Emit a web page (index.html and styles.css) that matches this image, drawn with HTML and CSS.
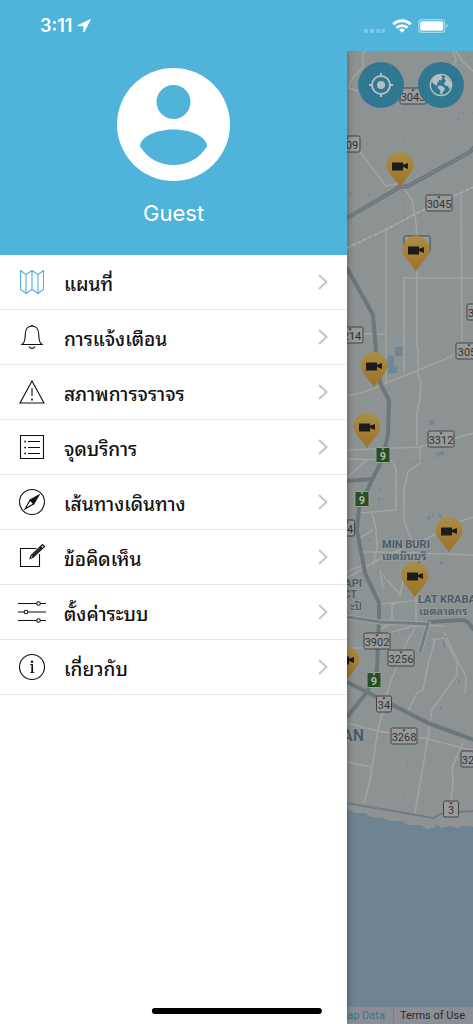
FILE: index.html
```
<!DOCTYPE html>
<html lang="th">
<head>
    <meta charset="UTF-8">
    <meta name="viewport" content="width=device-width, initial-scale=1.0">
    <title>Traffic Map</title>
    <link rel="stylesheet" href="styles.css">
</head>
<body>
    <header class="status-bar">
        <div class="status-time">
            <span>3:11</span>
            <svg width="14" height="14" viewBox="0 0 14 14"><path d="M13.4.6.7 6.7h6.2v6.2z" fill="#fff" stroke="#fff" stroke-linejoin="round"/></svg>
        </div>
        <div class="status-icons">
            <svg class="signal" width="22" height="14" viewBox="0 0 22 14" fill="#7cc9e6">
                <rect x="0" y="10" width="4" height="4" rx="1"/><rect x="6" y="10" width="4" height="4" rx="1"/><rect x="12" y="10" width="4" height="4" rx="1"/><rect x="17" y="10" width="4" height="4" rx="1"/>
            </svg>
            <svg width="20" height="14" viewBox="0 0 20 14" fill="none" stroke="#fff" stroke-width="2.8">
                <path d="M1.3 5.3a12.4 12.4 0 0 1 17.4 0M4.5 8.8a7.8 7.8 0 0 1 11 0"/>
                <path d="m10 13.8-3-3a4.2 4.2 0 0 1 6 0z" fill="#fff" stroke="none"/>
            </svg>
            <svg width="31" height="14" viewBox="0 0 31 14">
                <rect x=".7" y=".7" width="26" height="12.6" rx="3.4" fill="none" stroke="#a2d7ec" stroke-width="1.2"/>
                <rect x="2.2" y="2.2" width="23" height="9.6" rx="2" fill="#fff"/>
                <path d="M28.3 4.8c1.7.6 1.7 3.8 0 4.4z" fill="#a2d7ec"/>
            </svg>
        </div>
    </header>

    <div class="screen">
        <aside class="drawer">
            <div class="profile">
                <svg class="avatar" viewBox="0 0 113 113">
                    <circle cx="56.5" cy="56.5" r="56.5" fill="#fff"/>
                    <circle cx="56.5" cy="34" r="17" fill="#50b3d9"/>
                    <path d="M23 78.500C23 68 41 61.500 56.500 61.500S90 68 90 78.500C82 90.500 71 97 56.500 97S31 90.500 23 78.500z" fill="#50b3d9"/>
                </svg>
                <div class="profile-name">Guest</div>
            </div>

            <nav class="menu">
                <a href="#map">
                    <svg class="icon active" viewBox="0 0 28 28"><path d="M2.500 2.500 8 6.500v19l-5.500-4zM8 6.500l6-4v19l-6 4M14 2.500l6 4v19l-6-4M20 6.500l5.500-4v19l-5.500 4"/></svg>
                    <span>แผนที่</span>
                    <svg class="chevron" viewBox="0 0 10 16"><path d="m1 1 7.500 7L1 15"/></svg>
                </a>
                <a href="#notifications">
                    <svg class="icon" viewBox="0 0 28 28"><path d="M4 21.500c3-2.500 3-5 3.300-10.500C7.600 5.800 10.300 3 14 3s6.400 2.800 6.700 8c.3 5.500.3 8 3.300 10.500zM11.200 23.500c.8 2.600 4.800 2.600 5.600 0M13 2.500h2"/></svg>
                    <span>การแจ้งเตือน</span>
                    <svg class="chevron" viewBox="0 0 10 16"><path d="m1 1 7.500 7L1 15"/></svg>
                </a>
                <a href="#traffic">
                    <svg class="icon" viewBox="0 0 28 28"><path d="M14 3 26 25H2zM14 10v8"/><path d="M14 20.500v2" stroke-width="1.600"/></svg>
                    <span>สภาพการจราจร</span>
                    <svg class="chevron" viewBox="0 0 10 16"><path d="m1 1 7.500 7L1 15"/></svg>
                </a>
                <a href="#services">
                    <svg class="icon" viewBox="0 0 28 28"><path d="M2.500 2.500h23v23h-23zM10 8.500h12M10 14.500h12M10 20.500h12"/><path d="M6.300 8.500H8M6.300 14.500H8M6.300 20.500H8" stroke-width="1.700"/></svg>
                    <span>จุดบริการ</span>
                    <svg class="chevron" viewBox="0 0 10 16"><path d="m1 1 7.500 7L1 15"/></svg>
                </a>
                <a href="#routes">
                    <svg class="icon" viewBox="0 0 28 28"><circle cx="14" cy="14" r="12.500"/><path d="m7 21 5.200-9 3.600 3.800z"/><path d="M21 7 12.200 12l3.600 3.800z" fill="#111"/></svg>
                    <span>เส้นทางเดินทาง</span>
                    <svg class="chevron" viewBox="0 0 10 16"><path d="m1 1 7.500 7L1 15"/></svg>
                </a>
                <a href="#feedback">
                    <svg class="icon" viewBox="0 0 28 28"><path d="M18.500 5.500h-16v18h19V11M12 15.500l1-3L24.500 1.500l2 2L15 14.500zM22.500 3.500l2 2M14 13.500l9.500-9"/></svg>
                    <span>ข้อคิดเห็น</span>
                    <svg class="chevron" viewBox="0 0 10 16"><path d="m1 1 7.500 7L1 15"/></svg>
                </a>
                <a href="#settings">
                    <svg class="icon" viewBox="0 0 28 28"><path d="M0 5.500h18.500M22.500 5.500H28M0 14h6M10 14h18M0 22.500h18.500M22.500 22.500H28"/><g><circle cx="20.500" cy="5.500" r="1.800"/><circle cx="8" cy="14" r="1.800"/><circle cx="20.500" cy="22.500" r="1.800"/></g></svg>
                    <span>ตั้งค่าระบบ</span>
                    <svg class="chevron" viewBox="0 0 10 16"><path d="m1 1 7.500 7L1 15"/></svg>
                </a>
                <a href="#about">
                    <svg class="icon" viewBox="0 0 28 28"><circle cx="14" cy="14" r="12.500"/><path d="M12 11.500h2.300M12 19.500h4.400" stroke-width=".8"/><circle cx="14" cy="8.700" r=".7" fill="#111"/><path d="M14.200 11.200v8.300" stroke-width="1.700"/></svg>
                    <span>เกี่ยวกับ</span>
                    <svg class="chevron" viewBox="0 0 10 16"><path d="m1 1 7.500 7L1 15"/></svg>
                </a>
            </nav>
        </aside>

        <main class="map">
            <svg class="map-canvas" viewBox="347 51 126 973" preserveAspectRatio="xMinYMin slice">
                <defs>
                    <linearGradient id="pinFill" x1="0" y1="0" x2="0" y2="1">
                        <stop offset="0" stop-color="#aa8e45"/>
                        <stop offset="1" stop-color="#9c7226"/>
                    </linearGradient>
                    <g id="pin">
                        <path d="M0 0C-4-7-13.500-14-13.500-21.500a13.500 13.500 0 0 1 27 0C13.500-14 4-7 0 0z" fill="url(#pinFill)"/>
                        <path d="M-8-24.500H3v2.200l5-1.800v6l-5-1.800v3.400H-8z" fill="#1c1c1c"/>
                    </g>
                    <g id="shield4">
                        <rect class="plate" x="-13" y="-8" width="26" height="16" rx="1.500"/>
                        <path d="M-1.700-6.500h3.400L0-4.500z"/>
                    </g>
                    <g id="shield2">
                        <rect class="plate" x="-7.500" y="-8" width="15" height="16" rx="1.500"/>
                        <path d="M-1.700-6.500h3.400L0-4.500z"/>
                    </g>
                    <g id="shieldGreen">
                        <rect class="plate-green" x="-7" y="-7.500" width="14" height="15" rx="1"/>
                        <path d="M-1.700-6.500h3.400L0-4.500z"/>
                    </g>
                </defs>

                <!-- sea -->
                <path class="water" d="M347 809l8 4 10 0 6 4 12 1 6 3 12 0 8 4 12 0 6 4 6-1 4-3 4 3 8-2 9 2 5-2 12 1v400H347z"/>
                <g class="pond">
                    <path d="M395 347h8v9h-8zM388 356h6v11h3v6h-9v-5h-2zM429 420h5v5h-5zM435 454l8-3 1 3-7 2zM349 193l3-1-1 3zM457 120l2-3v4zM424 462l3-1v1zM432 508l2 9-1 1zM438 512l4 4-2 3zM439 561l5 2-4 1zM443 635l2 10-2 2zM376 490l6-2-2 2zM378 498h3l-3 3zM426 518l5-2-2 5zM367 194l2-1v2zM458 680h2v2h-2zM440 707h2v2h-2zM369 539h2v2h-2zM386 577h2v2h-2z"/>
                </g>

                <!-- minor roads -->
                <g class="road">
                    <path d="M366 51l-3 2v15l-10 9-5 11 11 3M453 51l3 9-3 6 4 4M456 51l7 11 11 10"/>
                    <path d="M360 152l26 34 14-3 12 16 4 24 1 10v112l1 7v23l3 7-1 16-3 15v33"/>
                    <path d="M386 228v154M461 193l1 148M404 373v-95h70M363 334h23M347 396l20-5 93-38 14-5"/>
                    <path d="M347 450l73-3 54-14M347 459l43 1 6 7v43l-36 3M420 447v16l-12 9-4 18v30l8 22M348 477l19-17"/>
                    <path d="M372 513l4 15 1 20-4 17M357 540l16-10M360 552h25l89 3M347 578l36-21 47-20 20-13 24-7M347 571l20-7M380 570l3 18M383 575l17 20 4-18M380 604l43-4M392 622v-17l6-3M416 592v35M392 622l-18 12"/>
                    <path d="M382 635l28-8 15-2 20 1M408 640l-18 43-12 47-8 50-6 23M408 640l7-12M435 640l-6 20-6 30-6 3-10 20M432 640l12-2 13 25v12l-25 35-4 27-13 76"/>
                    <path d="M347 723l31 8 50 8 35 9 11 2M463 742l-11 26 1 14-2 20M347 762l25 5M353 648h15M444 632l9 19 13 26-1 17"/>
                </g>
                <path class="rail-bed" d="M347 248l38-18 38-20 51-23"/>
                <path class="rail" d="M347 248l38-18 38-20 51-23"/>
                <path class="boundary" d="M438 110q8 7 20 3l16 0M368 461l20 2 30-1 50-14M390 633l34 0 49 8M404 137v82M408 757l-5 50"/>

                <!-- highways -->
                <path class="highway" d="M347 268l26 47 3 37 4 31 9 17-1 35-6 25-10 20-13 28-2 22 8 43 14 30v17l-2 50-10 22-20 25M347 481l25-2M347 682l36 18 45 23 46 17"/>
                <path class="highway" d="M428 622l35-2 5 2 6 8"/>
                <path class="motorway" d="M347 218l53-31 8-1 62-34 4-5"/>
                <path class="motorway-line" d="M347 218l53-31 8-1 62-34 4-5"/>
                <path class="lane-edge" d="M347 617l33 5 48 2-8 28"/>
                <path class="lane" d="M347 617l33 5 48 2-8 28"/>
                <path class="motorway-thin" d="M347 803l86 15 10-5 31-2"/>

                <!-- road numbers -->
                <g class="shield">
                    <use href="#shield4" x="413" y="96"/><text x="413" y="101">3043</text>
                    <use href="#shield4" x="347" y="144"/><text x="352" y="149">09</text>
                    <use href="#shield4" x="439" y="203"/><text x="439" y="208">3045</text>
                    <use href="#shield4" x="417" y="244"/>
                    <use href="#shield4" x="350" y="335"/><text x="352" y="340">214</text>
                    <use href="#shield4" x="480" y="312"/><text x="471" y="317">3</text>
                    <use href="#shield4" x="469" y="351"/><text x="467" y="356">305</text>
                    <use href="#shield4" x="441" y="439"/><text x="441" y="444">3312</text>
                    <use href="#shield2" x="347" y="528"/><text x="350" y="533">4</text>
                    <use href="#shield4" x="377" y="641"/><text x="377" y="646">3902</text>
                    <use href="#shield4" x="401" y="658"/><text x="401" y="663">3256</text>
                    <use href="#shield2" x="384" y="704"/><text x="384" y="709">34</text>
                    <use href="#shield4" x="404" y="736"/><text x="404" y="741">3268</text>
                    <use href="#shield4" x="474" y="759"/><text x="468" y="764">32</text>
                    <use href="#shield2" x="451" y="809"/><text x="451" y="814">3</text>
                </g>
                <g class="shield green">
                    <use href="#shieldGreen" x="383" y="455"/><text x="383" y="460">9</text>
                    <use href="#shieldGreen" x="362" y="499"/><text x="362" y="504">9</text>
                    <use href="#shieldGreen" x="374" y="680"/><text x="374" y="685">9</text>
                </g>

                <g class="place">
                    <text x="382" y="548">MIN BURI</text>
                    <text class="thai" x="382" y="560">เขตมีนบุรี</text>
                    <text x="418" y="603">LAT KRABA</text>
                    <text class="thai" x="419" y="615">เขตลาดกร</text>
                    <g text-anchor="end">
                        <text x="362" y="587">API</text>
                        <text x="357" y="598">CT</text>
                        <text class="thai" x="362" y="610">ะปิ</text>
                        <text class="city" x="364" y="741">AN</text>
                    </g>
                </g>

                <use href="#pin" x="400" y="187"/>
                <use href="#pin" x="416" y="271"/>
                <use href="#pin" x="374" y="387"/>
                <use href="#pin" x="367" y="448"/>
                <use href="#pin" x="449" y="552"/>
                <use href="#pin" x="415" y="597"/>
                <use href="#pin" x="346" y="681"/>
            </svg>

            <div class="map-buttons">
                <button type="button" aria-label="My location">
                    <svg viewBox="0 0 24 24" fill="none" stroke="#b5bec1" stroke-width="2"><circle cx="12" cy="12" r="9"/><circle cx="12" cy="12" r="4" fill="#b5bec1" stroke="none"/><path d="M12 0v4M12 20v4M0 12h4M20 12h4"/></svg>
                </button>
                <button type="button" aria-label="Map layers">
                    <svg viewBox="0 0 24 24"><circle cx="12" cy="12" r="10.700" fill="none" stroke="#b5bec1" stroke-width="1.300"/><path d="M2 8 4 4.500 8 2l5-.5-.5 2 1 1.500-1.500 2.500-2-.5-.5 2L8 10.500l.5 2.500-2-1-2.500-1.500L3.500 9zM9 13l3-.5 4 2.500-.5 2.500-1.500 1-.8 3.500-2.200-1.500.3-3L9 15z" fill="#b5bec1"/><path d="M15.500 3.500 19 5l3 5 .3 3.500-1.800 3-1.500-3.500-3-.5-.8-2.500 1.800-2.500-1.500-1.500z" fill="#b5bec1"/></svg>
                </button>
            </div>

            <footer class="map-credits">
                <a href="#map-data">Map Data</a>
                <a href="#terms" class="terms">Terms of Use</a>
            </footer>
        </main>
    </div>

    <div class="home-indicator"></div>
</body>
</html>
```
FILE: styles.css
```
* {
    box-sizing: border-box;
}
body {
    font-family: Inter, 'Noto Sans Thai Looped', Thonburi, Loma, 'Noto Sans', sans-serif;
    margin: 0;
    background: #fff;
    min-height: 100vh;
    display: flex;
    flex-direction: column;
    position: relative;
    overflow-x: hidden;
}
a {
    text-decoration: none;
}
svg {
    display: block;
    flex: none;
}

/* status bar */
.status-bar {
    display: flex;
    justify-content: space-between;
    align-items: center;
    height: 51px;
    padding: 0 24px 0 40px;
    background: #50b3d9;
    color: #fff;
}
.status-time {
    display: flex;
    align-items: center;
    gap: 5px;
    font-size: 18px;
    font-weight: 600;
}
.status-icons {
    display: flex;
    align-items: center;
    gap: 6px;
}

.screen {
    flex: 1;
    display: flex;
}

/* drawer */
.drawer {
    width: 73.4%;
    background: #fff;
    z-index: 1;
    box-shadow: 0 0 8px rgba(0, 0, 0, 0.4);
    clip-path: inset(0 -12px 0 0);
}
.profile {
    display: flex;
    flex-direction: column;
    align-items: center;
    gap: 18px;
    height: 204px;
    padding-top: 17px;
    background: #50b3d9;
    color: #fff;
}
.avatar {
    width: 113px;
    height: 113px;
}
.profile-name {
    font-size: 22px;
    line-height: 28px;
}
.menu a {
    display: flex;
    align-items: center;
    height: 55px;
    padding: 0 19px 0 18px;
    border-bottom: 1px solid #e6e6ea;
    color: #111;
    font-size: 19px;
    font-weight: 500;
}
.menu span {
    flex: 1;
    margin-left: 18px;
}
.icon {
    width: 28px;
    height: 28px;
    fill: none;
    stroke: #111;
    stroke-width: 1.1;
}
.icon.active {
    stroke: #50b3d9;
}
.chevron {
    width: 10px;
    height: 16px;
    fill: none;
    stroke: #c4c4c9;
    stroke-width: 2;
}

/* map */
.map {
    flex: 1;
    position: relative;
    overflow: hidden;
    background: #8d9293;
}
.map-canvas {
    position: absolute;
    inset: 0;
    width: 100%;
    height: 100%;
}
.water {
    fill: #6f8492;
}
.pond {
    fill: #6b8799;
}
.road {
    fill: none;
    stroke: #a2a3a3;
    stroke-width: 1.6;
    stroke-linejoin: round;
}
.rail-bed {
    fill: none;
    stroke: #9b9c9c;
    stroke-width: 2;
}
.rail {
    fill: none;
    stroke: #adaeae;
    stroke-width: 1.4;
    stroke-dasharray: 3 3;
}
.boundary {
    fill: none;
    stroke: #838787;
    stroke-width: 1;
    stroke-dasharray: 2 3;
}
.highway {
    fill: none;
    stroke: #6b777a;
    stroke-width: 4;
    stroke-linejoin: round;
}
.motorway {
    fill: none;
    stroke: #69767b;
    stroke-width: 4;
}
.motorway-line {
    fill: none;
    stroke: #83898b;
    stroke-width: 1;
}
.lane-edge {
    fill: none;
    stroke: #a2a3a3;
    stroke-width: 5;
}
.lane {
    fill: none;
    stroke: #6f7f86;
    stroke-width: 3;
}
.motorway-thin {
    fill: none;
    stroke: #727d80;
    stroke-width: 2;
}
.shield {
    font-family: Roboto, sans-serif;
    font-size: 11px;
    text-anchor: middle;
    fill: #333;
}
.plate {
    fill: #999b9b;
    stroke: #444;
    stroke-width: 1;
}
.green {
    fill: #b5b5b5;
    font-weight: 700;
}
.plate-green {
    fill: #255021;
    stroke: #9a9f9a;
}
.place {
    font-family: Roboto, 'Noto Sans Thai Looped', Thonburi, Loma, sans-serif;
    font-size: 11px;
    font-weight: 700;
    fill: #4b5c69;
    stroke: #969a9b;
    stroke-width: 2;
    paint-order: stroke;
}
.thai {
    font-size: 11px;
    font-weight: 600;
}
.city {
    font-size: 16px;
}
.map-buttons {
    position: absolute;
    top: 11px;
    right: 9px;
    display: flex;
    gap: 14px;
}
.map-buttons button {
    display: grid;
    place-items: center;
    width: 46px;
    height: 46px;
    padding: 0;
    border: none;
    border-radius: 50%;
    background: #307891;
    cursor: pointer;
}
.map-buttons svg {
    width: 24px;
    height: 24px;
}
.map-credits {
    position: absolute;
    right: 0;
    bottom: 0;
    display: flex;
    background: #8b8e95;
    font-family: Roboto, sans-serif;
    font-size: 11px;
    line-height: 17px;
    white-space: nowrap;
}
.map-credits a {
    padding: 0 8px 0 6px;
    color: #34778c;
}
.map-credits .terms {
    border-left: 1px solid #6f8492;
    color: #2b2b2d;
}

.home-indicator {
    position: absolute;
    left: 50%;
    bottom: 10px;
    z-index: 2;
    width: 36%;
    height: 6px;
    border-radius: 3px;
    background: #000;
    transform: translateX(-50%);
}
```
